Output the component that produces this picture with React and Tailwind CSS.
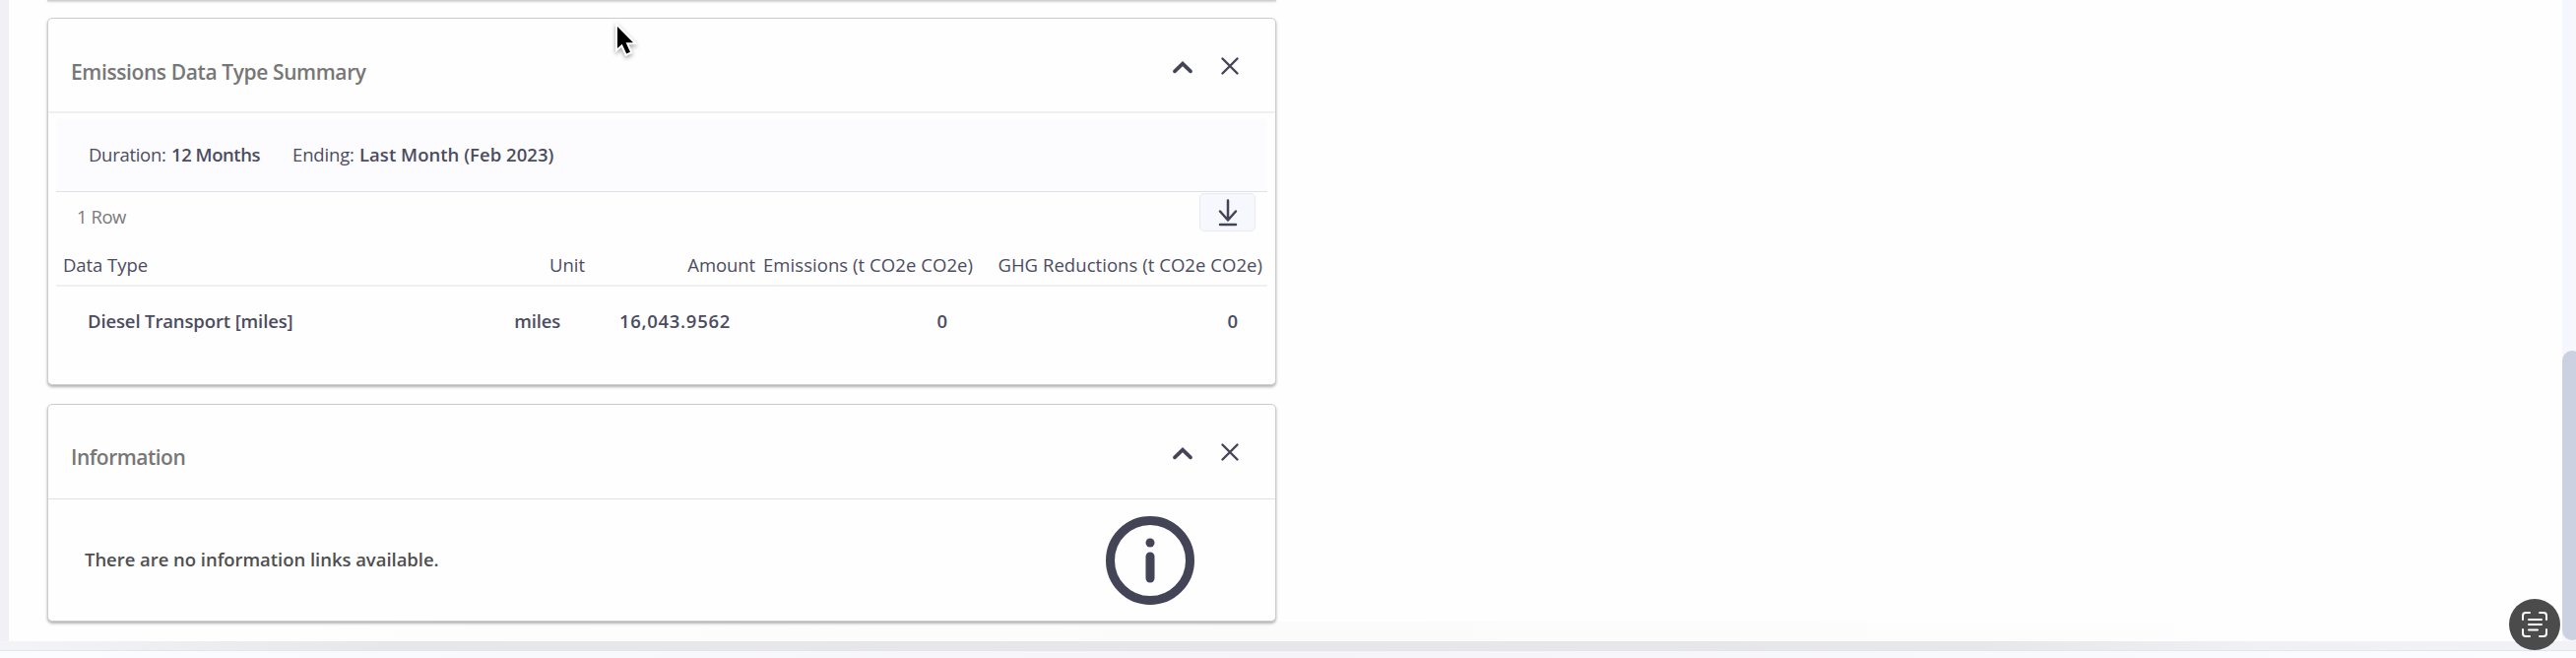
import React from "react";

const ICON = "#434456";

function ChevronIcon() {
  return (
    <svg className="mt-[42px] h-[14px] w-5" viewBox="0 0 20 14" fill="none" stroke={ICON} strokeWidth="3.6" strokeLinecap="round" strokeLinejoin="miter">
      <path d="M2 11.4 10 3.6l8 7.8" />
    </svg>
  );
}

function CloseIcon() {
  return (
    <svg className="mt-[39px] ml-[29px] size-[18px]" viewBox="0 0 18 18" fill="none" stroke={ICON} strokeWidth="2.4" strokeLinecap="round">
      <path d="M1.500 1.500l15 15M16.500 1.500l-15 15" />
    </svg>
  );
}

function CardHeader({ children, className }) {
  return (
    <header className={`flex items-start pl-[23px] pr-[37px] ${className}`}>
      {children}
      <ChevronIcon />
      <CloseIcon />
    </header>
  );
}

const CARD = "w-[1248px] rounded-[5px] border border-[#cdcdcd] bg-[#fefefe] shadow-[0_2px_3px_rgba(0,0,0,0.3)]";
const GRID = "grid grid-cols-[543px_172px_221px_294px] text-right whitespace-nowrap";

export default function App() {
  return (
    <div className="relative flex h-[668px] w-[2616px] flex-col overflow-hidden bg-[#f8f9fd] font-['Open_Sans',sans-serif] text-[18.5px] leading-6 text-[#4c4c60]">
      <div className="flex h-[651px] shrink-0">
        <div className="w-[9px] shrink-0 bg-[#f1f1f5]" />
        <main className="flex grow flex-col bg-[#fefefe] pl-[39px]">
          <div className="h-[1px] w-[1248px] shrink-0 bg-[#cfcfcf] shadow-[0_1px_2px_rgba(0,0,0,0.25)]" />

          <section className={`${CARD} mt-[17px] h-[373px] shrink-0`}>
            <CardHeader className="h-[96px] border-b-2 border-[#f0f0f1]">
              <h2 className="mt-[40px] grow text-[21px] leading-7 font-semibold tracking-[-0.4px] text-[#777]">Emissions Data Type Summary</h2>
            </CardHeader>
            <div className="mx-2 mt-[6px]">
              <div className="flex h-[74px] border-b border-[#dfe0e6] bg-[#fcfcfe] pt-6 pl-[33px]">
                <span className="w-[84px] tracking-[-0.3px]">Duration:</span>
                <b className="w-[123px] font-semibold tracking-[-0.45px]">12 Months</b>
                <span className="w-[68px] tracking-[-0.15px]">Ending:</span>
                <b className="font-semibold tracking-[0.03px]">Last Month (Feb 2023)</b>
              </div>
              <div className="flex h-[62px] items-start justify-between pr-[12px] pl-[21px]">
                <span className="pt-[13px] tracking-[-0.46px] text-[#7b7b7b]">1 Row</span>
                <button className="mt-px flex h-[39px] w-[57px] justify-center rounded-[5px] border border-[#eaebf2] bg-[#f7f8fd] pt-[5px]">
                  <svg className="h-[28px] w-5" viewBox="0 0 20 28" fill="none" stroke={ICON} strokeWidth="2.5" strokeLinecap="round" strokeLinejoin="round">
                    <path d="M10 1.500v20M2 12.500 10 21.500l8-9M2 26h16" />
                  </svg>
                </button>
              </div>
              <div className={`${GRID} h-[34px] border-b-2 border-[#f0f0f2]`}>
                <div className="flex justify-between pr-[6px] pl-[7px]">
                  <span className="tracking-[-0.06px]">Data Type</span>
                  <span>Unit</span>
                </div>
                <span className="pr-[5px] tracking-[-0.1px]">Amount</span>
                <span className="pr-[5px] tracking-[0.06px]">Emissions (t CO2e CO2e)</span>
                <span className="pr-[5px] tracking-[0.05px]">GHG Reductions (t CO2e CO2e)</span>
              </div>
              <div className={`${GRID} pt-[23px] font-semibold`}>
                <div className="flex justify-between pr-[31px] pl-[32px]">
                  <span className="tracking-[-0.13px]">Diesel Transport [miles]</span>
                  <span className="tracking-[-0.2px]">miles</span>
                </div>
                <span className="pr-[30px] tracking-[0.7px]">16,043.9562</span>
                <span className="pr-[31px]">0</span>
                <span className="pr-[30px]">0</span>
              </div>
            </div>
          </section>

          <section className={`${CARD} mt-[19px] h-[221px] shrink-0`}>
            <CardHeader className="h-[96px] border-b border-[#e3e3e5]">
              <h2 className="mt-[39px] grow text-[21px] leading-7 font-semibold tracking-[-0.5px] text-[#777]">Information</h2>
            </CardHeader>
            <div className="flex justify-between pt-[17px] pr-[82px] pl-[37px]">
              <p className="pt-[32px] font-semibold tracking-[-0.04px] text-[#4f4f4f]">There are no information links available.</p>
              <svg className="size-[90px]" viewBox="0 0 90 90" fill="none" stroke={ICON} strokeWidth="9" strokeLinecap="round">
                <circle cx="45" cy="45" r="40.500" />
                <path d="M45 41v22" />
                <circle cx="45" cy="27" r="4.500" fill={ICON} stroke="none" />
              </svg>
            </div>
          </section>
          <div className="-ml-[39px] grow bg-linear-to-r from-transparent from-5% via-black/[0.012] to-transparent to-95%" />
        </main>
        <div className="flex w-[14px] shrink-0 flex-col overflow-hidden bg-[#f6f7fd] pt-[356px]">
          <div className="h-[294px] w-[20px] rounded-[10px] bg-[#cbd1e0]" />
        </div>
      </div>
      <div className="h-[10px] shrink-0 border-b border-[#e1e7f2] bg-linear-to-r from-[#f4f4f8] via-[#e7e7e9] via-15% to-[#f2f2f6]">
        <div className="ml-[390px] h-full w-[1900px] bg-linear-to-r from-[#e7e7e9] via-[#e7e7e9] via-85% to-transparent" />
      </div>
      <div className="grow bg-linear-to-r from-[#fbfcff] via-[#f5f5f8] to-[#fbfcff]" />

      <svg className="absolute top-[19px] left-[618px] h-[44px] w-[34px] drop-shadow-[0_2px_2px_rgba(0,0,0,0.35)]" viewBox="0 0 34 44">
        <path d="M9 8v22l4.700-4.300 4.500 9.800 3.800-1.700-4.400-9.500H25z" fill="#000" stroke="#fff" strokeWidth="4" paintOrder="stroke" />
      </svg>
      <div className="absolute top-[608px] left-[2548px] flex size-[52px] items-center justify-center rounded-full bg-[#4b4b4b]">
        <svg className="size-[28px]" viewBox="0 0 28 28" fill="none" stroke="#fff" strokeWidth="2" strokeLinecap="round">
          <path d="M2 9V5a3 3 0 0 1 3-3h4M19 2h4a3 3 0 0 1 3 3v4M26 19v4a3 3 0 0 1-3 3h-4M9 26H5a3 3 0 0 1-3-3v-4M8 9h13M8 14h13M8 19.500h9" />
        </svg>
      </div>
    </div>
  );
}
